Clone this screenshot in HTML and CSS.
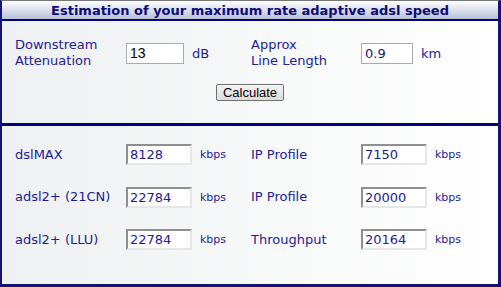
FILE: index.html
```html
<!DOCTYPE html>
<html lang="en">

<head>
    <meta charset="UTF-8">
    <title>Adaptive ADSL Speed Estimate</title>
    <link rel="stylesheet" href="styles.css">
</head>

<body>
    <div class="panel">
        <div class="panel-title">Estimation of your maximum rate adaptive adsl speed</div>

        <div class="section inputs">
            <div class="row">
                <div class="label">Downstream<br>Attenuation</div>
                <input class="field field-top field-atten" type="text" value="13">
                <div class="unit unit-top">dB</div>
                <div class="label label-right">Approx<br>Line Length</div>
                <input class="field field-top field-length" type="text" value="0.9">
                <div class="unit unit-top">km</div>
            </div>
            <div class="actions">
                <button class="calc-btn">Calculate</button>
            </div>
        </div>

        <div class="section results">
            <div class="row result-row">
                <div class="label">dslMAX</div>
                <input class="field field-result" type="text" value="8128">
                <div class="unit">kbps</div>
                <div class="label label-right">IP Profile</div>
                <input class="field field-result" type="text" value="7150">
                <div class="unit">kbps</div>
            </div>
            <div class="row result-row">
                <div class="label">adsl2+ (21CN)</div>
                <input class="field field-result" type="text" value="22784">
                <div class="unit">kbps</div>
                <div class="label label-right">IP Profile</div>
                <input class="field field-result" type="text" value="20000">
                <div class="unit">kbps</div>
            </div>
            <div class="row result-row">
                <div class="label">adsl2+ (LLU)</div>
                <input class="field field-result" type="text" value="22784">
                <div class="unit">kbps</div>
                <div class="label label-right">Throughput</div>
                <input class="field field-result" type="text" value="20164">
                <div class="unit">kbps</div>
            </div>
        </div>
    </div>
</body>

</html>
```

FILE: styles.css
```css
* {
    margin: 0;
    padding: 0;
    box-sizing: border-box;
}

body {
    font-family: 'DejaVu Sans', Verdana, sans-serif;
    background-color: #fff;
}

.panel {
    width: 501px;
    height: 287px;
    border-top: 1px solid #777;
    border-left: 2px solid #14146e;
    border-right: 3px solid #14146e;
    border-bottom: 3px solid #14146e;
    display: flex;
    flex-direction: column;
}

.panel-title {
    height: 20px;
    padding-top: 1px;
    background: linear-gradient(to bottom, #ffffff, #b9c1d7);
    border-bottom: 2px solid #00007f;
    color: #0c0c78;
    font-size: 13px;
    font-weight: bold;
    text-align: center;
    line-height: 17px;
}

.section {
    background: linear-gradient(to right, #eef0f1, #ffffff);
}

.inputs {
    height: 105px;
    padding: 16px 0 0 13px;
    border-bottom: 3px solid #00007f;
}

.results {
    flex: 1;
    padding: 18px 0 0 13px;
}

.row {
    display: flex;
    align-items: center;
}

.label {
    width: 111px;
    color: #1c1c96;
    font-size: 13px;
    line-height: 16px;
}

.label-right {
    width: 110px;
}

.field {
    height: 21px;
    font-family: 'DejaVu Sans', Verdana, sans-serif;
    font-size: 13px;
    padding: 0 2px;
    background-color: #fff;
}

.field-top {
    border: 1px solid #aaa;
    color: #000;
    font-family: 'Liberation Sans', Arial, sans-serif;
    font-size: 14px;
    padding: 0 3px;
}

.field-atten {
    width: 58px;
}

.field-length {
    width: 52px;
    color: #14147a;
    font-family: 'DejaVu Sans', Verdana, sans-serif;
    font-size: 13px;
}

.field-result {
    width: 66px;
    color: #1c1c96;
    border-top: 2px solid #8f8f8f;
    border-left: 2px solid #8f8f8f;
    border-right: 2px solid #e6e6e6;
    border-bottom: 2px solid #e6e6e6;
}

.unit {
    width: 59px;
    padding-left: 8px;
    color: #1c1c96;
    font-size: 11px;
}

.unit-top {
    width: 67px;
    font-size: 13px;
}

.actions {
    text-align: center;
    margin-top: 13px;
    padding-right: 13px;
}

.calc-btn {
    font-family: 'Liberation Sans', Arial, sans-serif;
    font-size: 13px;
    height: 17px;
    padding: 0 6px;
    border: 1px solid #707070;
    border-radius: 2px;
    background: linear-gradient(to bottom, #f4f4f4, #dcdcdc);
    color: #000;
}

.result-row {
    margin-bottom: 21.5px;
}
```
